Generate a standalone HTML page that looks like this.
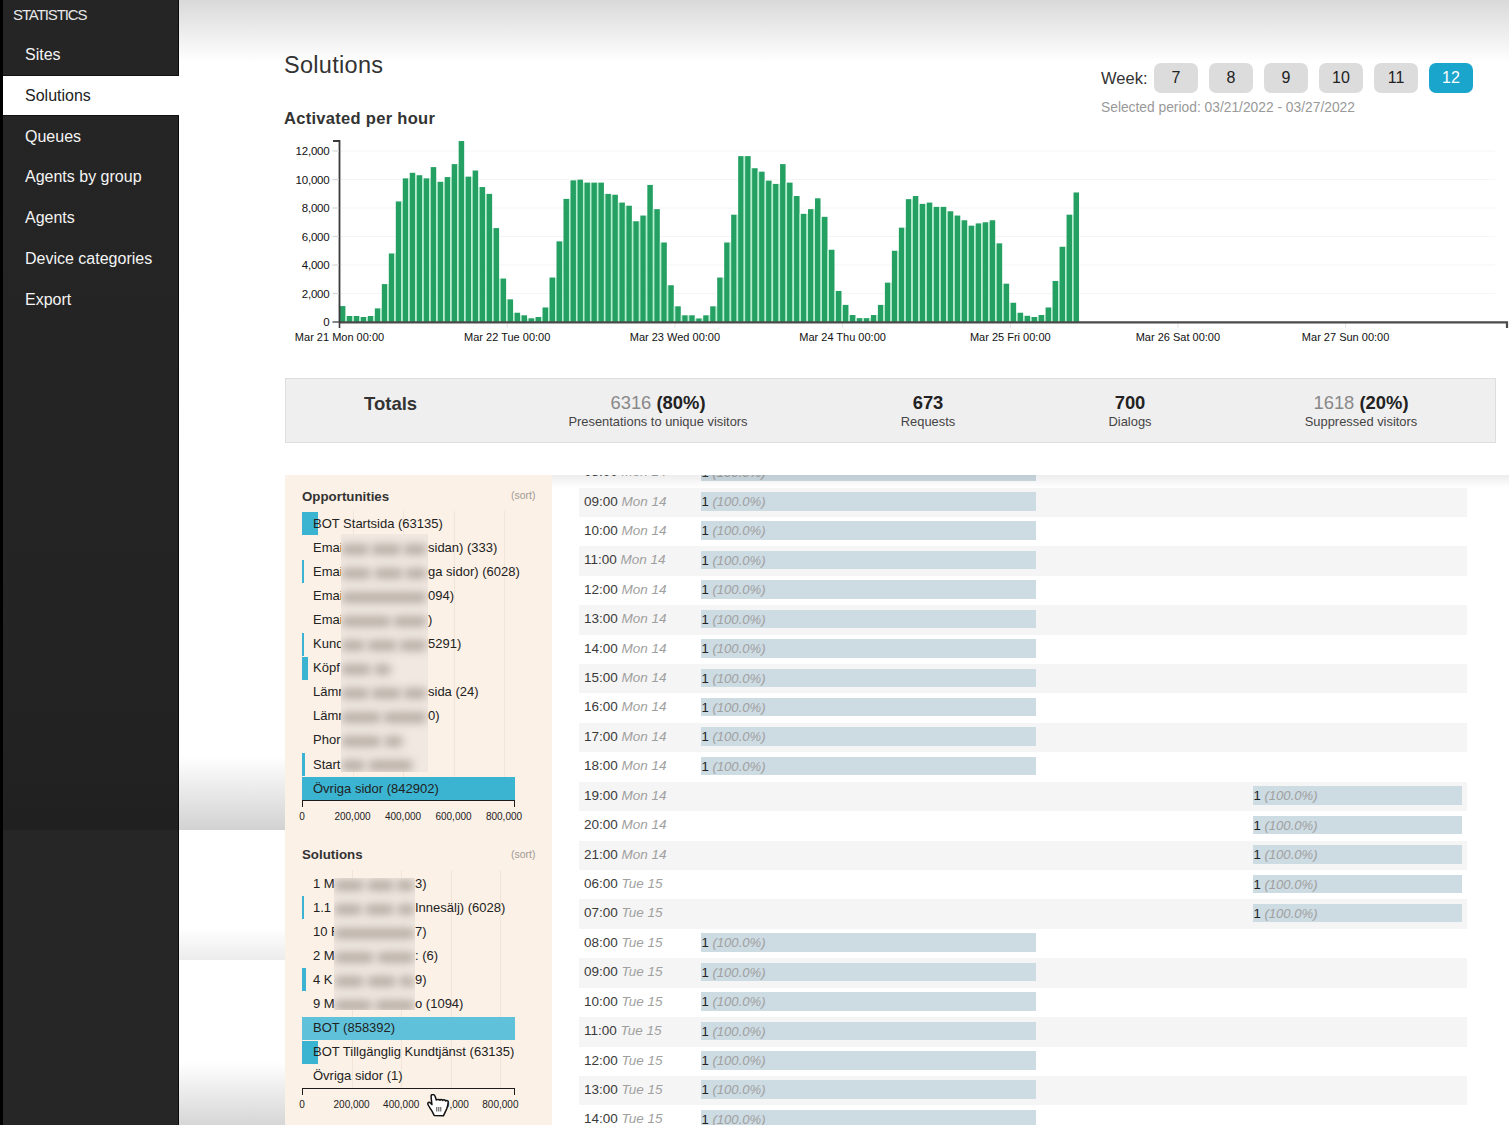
<!DOCTYPE html>
<html><head><meta charset="utf-8"><style>
*{margin:0;padding:0;box-sizing:border-box}
html,body{width:1509px;height:1125px;overflow:hidden;background:#fff;font-family:"Liberation Sans",sans-serif;position:relative}
.blk{position:absolute;left:0;top:0;width:3px;height:1125px;background:#000}
.sb{position:absolute;left:3px;top:0;width:176px;height:1125px;background:linear-gradient(#252525 0,#232323 700px,#202020 830px,#262626 830px);border-right:1px solid #0a0a0a;color:#f0f0f0}
.sbh{position:absolute;left:10px;top:5.5px;font-size:15px;letter-spacing:-1.1px;color:#e8e8e8}
.mi{position:absolute;left:0;width:176px;height:41px;line-height:41px;padding-left:22px;font-size:16px;color:#f4f4f4}
.mi.act{background:#fff;color:#222;width:176px;border-top:1px solid #111;border-bottom:1px solid #111;line-height:39px}
.topg{position:absolute;left:179px;top:0;width:1330px;height:62px;background:linear-gradient(#d9d9d9,#ffffff)}
.g1{position:absolute;left:179px;top:756px;width:106px;height:74px;background:linear-gradient(#fff,#d2d2d2)}
.g2{position:absolute;left:179px;top:830px;width:106px;height:130px;background:linear-gradient(#fff 75%,#ececec)}
.g3{position:absolute;left:179px;top:1062px;width:106px;height:63px;background:linear-gradient(#fff,#d6d6d6)}
.h1{position:absolute;left:284px;top:51.5px;font-size:23.5px;letter-spacing:0.3px;color:#333}
.h2{position:absolute;left:284px;top:109px;font-size:16.5px;letter-spacing:0.3px;font-weight:bold;color:#333}
.wk{position:absolute;font-size:16.5px;color:#333}
.wb{position:absolute;top:63px;width:44px;height:30px;border-radius:7px;background:#dcdcdc;color:#222;font-size:16px;text-align:center;line-height:30px}
.wb.on{background:#1aa5cc;color:#fff}
.per{position:absolute;left:1101px;top:100px;font-size:13.8px;color:#999}
.tot{position:absolute;left:285px;top:378px;width:1211px;height:65px;background:#f0eff0;border:1px solid #dedede}
.tt{position:absolute;left:78px;top:14px;font-size:18.5px;font-weight:bold;color:#333}
.tc{position:absolute;top:14px;width:200px;text-align:center;margin-left:-1px}
.tv{font-size:18.4px;color:#222;line-height:20px}
.tv .g{color:#888}
.tl{font-size:12.9px;color:#444;margin-top:1px}
.pan{position:absolute;left:285px;top:475px;width:267px;height:650px;background:#fcf1e6}
.ph{position:absolute;left:17px;font-size:13.3px;font-weight:bold;color:#333}
.srt{position:absolute;left:226px;font-size:10.5px;color:#a09a95}
.vg{position:absolute;width:1px;background:#f3e4d8}
.bar{position:absolute;left:17px;height:23px;background:#3ab4d1}
.it{position:absolute;left:28px;font-size:13px;color:#222;white-space:nowrap}
.it2{position:absolute;left:142px;font-size:13px;color:#222;white-space:nowrap}
.ax{position:absolute;left:17px;width:213px;height:7px;border:1.6px solid #1c1c1c;border-bottom:none}
.al{position:absolute;width:60px;text-align:center;font-size:10px;color:#222}
.tab{position:absolute;left:0;top:475px;width:1509px;height:650px;overflow:hidden}
.row{position:absolute;left:579px;width:888px;height:29.5px;font-size:13.5px;color:#3a3a3a;line-height:28px;padding-left:5px}
.row i{color:#a0a0a0}
.rb{position:absolute;top:4.5px;height:18.5px;background:#cddbe3;line-height:20px;padding-left:0.5px;font-size:13.1px;white-space:nowrap}
.rb b{font-weight:normal;color:#222}
.blur{position:absolute;background:#d8cfc8;filter:blur(6px)}
</style></head>
<body>
<div class="topg"></div>
<div class="g1"></div><div class="g2"></div><div class="g3"></div>
<div class="blk"></div>
<div class="sb">
<div class="sbh">STATISTICS</div>
<div class="mi" style="top:34.0px">Sites</div>
<div class="mi act" style="top:74.8px">Solutions</div>
<div class="mi" style="top:115.6px">Queues</div>
<div class="mi" style="top:156.4px">Agents by group</div>
<div class="mi" style="top:197.2px">Agents</div>
<div class="mi" style="top:238.0px">Device categories</div>
<div class="mi" style="top:278.8px">Export</div>
</div>
<div class="h1">Solutions</div>
<div class="h2">Activated per hour</div>
<div class="wk" style="left:1101px;top:69px">Week:</div>
<div class="wb" style="left:1154px">7</div>
<div class="wb" style="left:1209px">8</div>
<div class="wb" style="left:1264px">9</div>
<div class="wb" style="left:1319px">10</div>
<div class="wb" style="left:1374px">11</div>
<div class="wb on" style="left:1429px">12</div>
<div class="per">Selected period: 03/21/2022 - 03/27/2022</div>
<svg width="1509" height="360" style="position:absolute;left:0;top:0">
<line x1="340" y1="293.5" x2="1495" y2="293.5" stroke="#f5f5f5" stroke-width="1"/>
<line x1="340" y1="265.0" x2="1495" y2="265.0" stroke="#f5f5f5" stroke-width="1"/>
<line x1="340" y1="236.5" x2="1495" y2="236.5" stroke="#f5f5f5" stroke-width="1"/>
<line x1="340" y1="208.0" x2="1495" y2="208.0" stroke="#f5f5f5" stroke-width="1"/>
<line x1="340" y1="179.5" x2="1495" y2="179.5" stroke="#f5f5f5" stroke-width="1"/>
<line x1="340" y1="151.0" x2="1495" y2="151.0" stroke="#f5f5f5" stroke-width="1"/>
<rect x="339.90" y="306.11" width="5.5" height="15.89" fill="#23a062"/>
<rect x="345.40" y="316.01" width="1.49" height="5.99" fill="#b4f0cf"/>
<rect x="346.89" y="316.01" width="5.5" height="5.99" fill="#23a062"/>
<rect x="352.39" y="316.01" width="1.49" height="5.99" fill="#b4f0cf"/>
<rect x="353.87" y="316.01" width="5.5" height="5.99" fill="#23a062"/>
<rect x="359.37" y="317.01" width="1.49" height="4.99" fill="#b4f0cf"/>
<rect x="360.86" y="317.01" width="5.5" height="4.99" fill="#23a062"/>
<rect x="366.36" y="317.01" width="1.49" height="4.99" fill="#b4f0cf"/>
<rect x="367.85" y="316.01" width="5.5" height="5.99" fill="#23a062"/>
<rect x="373.35" y="316.01" width="1.49" height="5.99" fill="#b4f0cf"/>
<rect x="374.83" y="308.39" width="5.5" height="13.61" fill="#23a062"/>
<rect x="380.33" y="308.39" width="1.49" height="13.61" fill="#b4f0cf"/>
<rect x="381.82" y="284.10" width="5.5" height="37.91" fill="#23a062"/>
<rect x="387.32" y="284.10" width="1.49" height="37.91" fill="#b4f0cf"/>
<rect x="388.81" y="253.46" width="5.5" height="68.54" fill="#23a062"/>
<rect x="394.31" y="253.46" width="1.49" height="68.54" fill="#b4f0cf"/>
<rect x="395.80" y="201.44" width="5.5" height="120.56" fill="#23a062"/>
<rect x="401.30" y="201.44" width="1.49" height="120.56" fill="#b4f0cf"/>
<rect x="402.78" y="178.36" width="5.5" height="143.64" fill="#23a062"/>
<rect x="408.28" y="178.36" width="1.49" height="143.64" fill="#b4f0cf"/>
<rect x="409.77" y="172.80" width="5.5" height="149.20" fill="#23a062"/>
<rect x="415.27" y="175.22" width="1.49" height="146.78" fill="#b4f0cf"/>
<rect x="416.76" y="175.22" width="5.5" height="146.78" fill="#23a062"/>
<rect x="422.26" y="178.36" width="1.49" height="143.64" fill="#b4f0cf"/>
<rect x="423.74" y="178.36" width="5.5" height="143.64" fill="#23a062"/>
<rect x="429.24" y="178.36" width="1.49" height="143.64" fill="#b4f0cf"/>
<rect x="430.73" y="167.10" width="5.5" height="154.90" fill="#23a062"/>
<rect x="436.23" y="181.78" width="1.49" height="140.22" fill="#b4f0cf"/>
<rect x="437.72" y="181.78" width="5.5" height="140.22" fill="#23a062"/>
<rect x="443.22" y="181.78" width="1.49" height="140.22" fill="#b4f0cf"/>
<rect x="444.70" y="177.08" width="5.5" height="144.92" fill="#23a062"/>
<rect x="450.20" y="177.08" width="1.49" height="144.92" fill="#b4f0cf"/>
<rect x="451.69" y="164.11" width="5.5" height="157.89" fill="#23a062"/>
<rect x="457.19" y="164.11" width="1.49" height="157.89" fill="#b4f0cf"/>
<rect x="458.68" y="141.03" width="5.5" height="180.97" fill="#23a062"/>
<rect x="464.18" y="176.65" width="1.49" height="145.35" fill="#b4f0cf"/>
<rect x="465.67" y="176.65" width="5.5" height="145.35" fill="#23a062"/>
<rect x="471.17" y="176.65" width="1.49" height="145.35" fill="#b4f0cf"/>
<rect x="472.65" y="170.52" width="5.5" height="151.48" fill="#23a062"/>
<rect x="478.15" y="187.05" width="1.49" height="134.95" fill="#b4f0cf"/>
<rect x="479.64" y="187.05" width="5.5" height="134.95" fill="#23a062"/>
<rect x="485.14" y="193.89" width="1.49" height="128.11" fill="#b4f0cf"/>
<rect x="486.63" y="193.89" width="5.5" height="128.11" fill="#23a062"/>
<rect x="492.13" y="228.09" width="1.49" height="93.91" fill="#b4f0cf"/>
<rect x="493.61" y="228.09" width="5.5" height="93.91" fill="#23a062"/>
<rect x="499.11" y="278.54" width="1.49" height="43.46" fill="#b4f0cf"/>
<rect x="500.60" y="278.54" width="5.5" height="43.46" fill="#23a062"/>
<rect x="506.10" y="299.34" width="1.49" height="22.66" fill="#b4f0cf"/>
<rect x="507.59" y="299.34" width="5.5" height="22.66" fill="#23a062"/>
<rect x="513.09" y="312.74" width="1.49" height="9.26" fill="#b4f0cf"/>
<rect x="514.57" y="312.74" width="5.5" height="9.26" fill="#23a062"/>
<rect x="520.07" y="315.30" width="1.49" height="6.70" fill="#b4f0cf"/>
<rect x="521.56" y="315.30" width="5.5" height="6.70" fill="#23a062"/>
<rect x="527.06" y="318.30" width="1.49" height="3.71" fill="#b4f0cf"/>
<rect x="528.55" y="318.30" width="5.5" height="3.71" fill="#23a062"/>
<rect x="534.05" y="318.30" width="1.49" height="3.71" fill="#b4f0cf"/>
<rect x="535.54" y="317.01" width="5.5" height="4.99" fill="#23a062"/>
<rect x="541.04" y="317.01" width="1.49" height="4.99" fill="#b4f0cf"/>
<rect x="542.52" y="307.46" width="5.5" height="14.54" fill="#23a062"/>
<rect x="548.02" y="307.46" width="1.49" height="14.54" fill="#b4f0cf"/>
<rect x="549.51" y="277.54" width="5.5" height="44.46" fill="#23a062"/>
<rect x="555.01" y="277.54" width="1.49" height="44.46" fill="#b4f0cf"/>
<rect x="556.50" y="241.34" width="5.5" height="80.66" fill="#23a062"/>
<rect x="562.00" y="241.34" width="1.49" height="80.66" fill="#b4f0cf"/>
<rect x="563.48" y="198.88" width="5.5" height="123.12" fill="#23a062"/>
<rect x="568.98" y="198.88" width="1.49" height="123.12" fill="#b4f0cf"/>
<rect x="570.47" y="180.35" width="5.5" height="141.65" fill="#23a062"/>
<rect x="575.97" y="180.35" width="1.49" height="141.65" fill="#b4f0cf"/>
<rect x="577.46" y="179.64" width="5.5" height="142.36" fill="#23a062"/>
<rect x="582.96" y="182.63" width="1.49" height="139.37" fill="#b4f0cf"/>
<rect x="584.45" y="182.63" width="5.5" height="139.37" fill="#23a062"/>
<rect x="589.95" y="182.63" width="1.49" height="139.37" fill="#b4f0cf"/>
<rect x="591.43" y="182.63" width="5.5" height="139.37" fill="#23a062"/>
<rect x="596.93" y="182.63" width="1.49" height="139.37" fill="#b4f0cf"/>
<rect x="598.42" y="182.63" width="5.5" height="139.37" fill="#23a062"/>
<rect x="603.92" y="193.89" width="1.49" height="128.11" fill="#b4f0cf"/>
<rect x="605.41" y="193.89" width="5.5" height="128.11" fill="#23a062"/>
<rect x="610.91" y="194.75" width="1.49" height="127.25" fill="#b4f0cf"/>
<rect x="612.39" y="194.75" width="5.5" height="127.25" fill="#23a062"/>
<rect x="617.89" y="202.58" width="1.49" height="119.42" fill="#b4f0cf"/>
<rect x="619.38" y="202.58" width="5.5" height="119.42" fill="#23a062"/>
<rect x="624.88" y="205.72" width="1.49" height="116.28" fill="#b4f0cf"/>
<rect x="626.37" y="205.72" width="5.5" height="116.28" fill="#23a062"/>
<rect x="631.87" y="221.25" width="1.49" height="100.75" fill="#b4f0cf"/>
<rect x="633.35" y="221.25" width="5.5" height="100.75" fill="#23a062"/>
<rect x="638.85" y="221.25" width="1.49" height="100.75" fill="#b4f0cf"/>
<rect x="640.34" y="215.55" width="5.5" height="106.45" fill="#23a062"/>
<rect x="645.84" y="215.55" width="1.49" height="106.45" fill="#b4f0cf"/>
<rect x="647.33" y="184.91" width="5.5" height="137.09" fill="#23a062"/>
<rect x="652.83" y="209.14" width="1.49" height="112.86" fill="#b4f0cf"/>
<rect x="654.31" y="209.14" width="5.5" height="112.86" fill="#23a062"/>
<rect x="659.81" y="242.49" width="1.49" height="79.52" fill="#b4f0cf"/>
<rect x="661.30" y="242.49" width="5.5" height="79.52" fill="#23a062"/>
<rect x="666.80" y="285.24" width="1.49" height="36.77" fill="#b4f0cf"/>
<rect x="668.29" y="285.24" width="5.5" height="36.77" fill="#23a062"/>
<rect x="673.79" y="306.32" width="1.49" height="15.68" fill="#b4f0cf"/>
<rect x="675.28" y="306.32" width="5.5" height="15.68" fill="#23a062"/>
<rect x="680.78" y="315.30" width="1.49" height="6.70" fill="#b4f0cf"/>
<rect x="682.26" y="315.30" width="5.5" height="6.70" fill="#23a062"/>
<rect x="687.76" y="315.30" width="1.49" height="6.70" fill="#b4f0cf"/>
<rect x="689.25" y="315.30" width="5.5" height="6.70" fill="#23a062"/>
<rect x="694.75" y="318.44" width="1.49" height="3.56" fill="#b4f0cf"/>
<rect x="696.24" y="318.44" width="5.5" height="3.56" fill="#23a062"/>
<rect x="701.74" y="318.44" width="1.49" height="3.56" fill="#b4f0cf"/>
<rect x="703.22" y="315.30" width="5.5" height="6.70" fill="#23a062"/>
<rect x="708.72" y="315.30" width="1.49" height="6.70" fill="#b4f0cf"/>
<rect x="710.21" y="306.32" width="5.5" height="15.68" fill="#23a062"/>
<rect x="715.71" y="306.32" width="1.49" height="15.68" fill="#b4f0cf"/>
<rect x="717.20" y="277.54" width="5.5" height="44.46" fill="#23a062"/>
<rect x="722.70" y="277.54" width="1.49" height="44.46" fill="#b4f0cf"/>
<rect x="724.19" y="242.49" width="5.5" height="79.52" fill="#23a062"/>
<rect x="729.69" y="242.49" width="1.49" height="79.52" fill="#b4f0cf"/>
<rect x="731.17" y="214.70" width="5.5" height="107.30" fill="#23a062"/>
<rect x="736.67" y="214.70" width="1.49" height="107.30" fill="#b4f0cf"/>
<rect x="738.16" y="156.13" width="5.5" height="165.87" fill="#23a062"/>
<rect x="743.66" y="156.13" width="1.49" height="165.87" fill="#b4f0cf"/>
<rect x="745.15" y="156.13" width="5.5" height="165.87" fill="#23a062"/>
<rect x="750.65" y="168.24" width="1.49" height="153.76" fill="#b4f0cf"/>
<rect x="752.13" y="168.24" width="5.5" height="153.76" fill="#23a062"/>
<rect x="757.63" y="171.66" width="1.49" height="150.34" fill="#b4f0cf"/>
<rect x="759.12" y="171.66" width="5.5" height="150.34" fill="#23a062"/>
<rect x="764.62" y="180.64" width="1.49" height="141.36" fill="#b4f0cf"/>
<rect x="766.11" y="180.64" width="5.5" height="141.36" fill="#23a062"/>
<rect x="771.61" y="183.92" width="1.49" height="138.08" fill="#b4f0cf"/>
<rect x="773.09" y="183.92" width="5.5" height="138.08" fill="#23a062"/>
<rect x="778.59" y="183.92" width="1.49" height="138.08" fill="#b4f0cf"/>
<rect x="780.08" y="164.11" width="5.5" height="157.89" fill="#23a062"/>
<rect x="785.58" y="182.63" width="1.49" height="139.37" fill="#b4f0cf"/>
<rect x="787.07" y="182.63" width="5.5" height="139.37" fill="#23a062"/>
<rect x="792.57" y="196.03" width="1.49" height="125.97" fill="#b4f0cf"/>
<rect x="794.05" y="196.03" width="5.5" height="125.97" fill="#23a062"/>
<rect x="799.55" y="213.84" width="1.49" height="108.16" fill="#b4f0cf"/>
<rect x="801.04" y="213.84" width="5.5" height="108.16" fill="#23a062"/>
<rect x="806.54" y="213.84" width="1.49" height="108.16" fill="#b4f0cf"/>
<rect x="808.03" y="209.14" width="5.5" height="112.86" fill="#23a062"/>
<rect x="813.53" y="209.14" width="1.49" height="112.86" fill="#b4f0cf"/>
<rect x="815.02" y="198.31" width="5.5" height="123.69" fill="#23a062"/>
<rect x="820.52" y="216.83" width="1.49" height="105.17" fill="#b4f0cf"/>
<rect x="822.00" y="216.83" width="5.5" height="105.17" fill="#23a062"/>
<rect x="827.50" y="249.75" width="1.49" height="72.25" fill="#b4f0cf"/>
<rect x="828.99" y="249.75" width="5.5" height="72.25" fill="#23a062"/>
<rect x="834.49" y="290.94" width="1.49" height="31.07" fill="#b4f0cf"/>
<rect x="835.98" y="290.94" width="5.5" height="31.07" fill="#23a062"/>
<rect x="841.48" y="304.90" width="1.49" height="17.10" fill="#b4f0cf"/>
<rect x="842.96" y="304.90" width="5.5" height="17.10" fill="#23a062"/>
<rect x="848.46" y="315.02" width="1.49" height="6.98" fill="#b4f0cf"/>
<rect x="849.95" y="315.02" width="5.5" height="6.98" fill="#23a062"/>
<rect x="855.45" y="318.15" width="1.49" height="3.85" fill="#b4f0cf"/>
<rect x="856.94" y="318.15" width="5.5" height="3.85" fill="#23a062"/>
<rect x="862.44" y="318.15" width="1.49" height="3.85" fill="#b4f0cf"/>
<rect x="863.92" y="318.15" width="5.5" height="3.85" fill="#23a062"/>
<rect x="869.42" y="318.15" width="1.49" height="3.85" fill="#b4f0cf"/>
<rect x="870.91" y="315.02" width="5.5" height="6.98" fill="#23a062"/>
<rect x="876.41" y="315.02" width="1.49" height="6.98" fill="#b4f0cf"/>
<rect x="877.90" y="304.90" width="5.5" height="17.10" fill="#23a062"/>
<rect x="883.40" y="304.90" width="1.49" height="17.10" fill="#b4f0cf"/>
<rect x="884.89" y="282.67" width="5.5" height="39.33" fill="#23a062"/>
<rect x="890.39" y="282.67" width="1.49" height="39.33" fill="#b4f0cf"/>
<rect x="891.87" y="250.75" width="5.5" height="71.25" fill="#23a062"/>
<rect x="897.37" y="250.75" width="1.49" height="71.25" fill="#b4f0cf"/>
<rect x="898.86" y="227.66" width="5.5" height="94.34" fill="#23a062"/>
<rect x="904.36" y="227.66" width="1.49" height="94.34" fill="#b4f0cf"/>
<rect x="905.85" y="199.16" width="5.5" height="122.84" fill="#23a062"/>
<rect x="911.35" y="199.16" width="1.49" height="122.84" fill="#b4f0cf"/>
<rect x="912.83" y="196.03" width="5.5" height="125.97" fill="#23a062"/>
<rect x="918.33" y="203.87" width="1.49" height="118.13" fill="#b4f0cf"/>
<rect x="919.82" y="203.87" width="5.5" height="118.13" fill="#23a062"/>
<rect x="925.32" y="203.87" width="1.49" height="118.13" fill="#b4f0cf"/>
<rect x="926.81" y="202.58" width="5.5" height="119.42" fill="#23a062"/>
<rect x="932.31" y="206.86" width="1.49" height="115.14" fill="#b4f0cf"/>
<rect x="933.79" y="206.86" width="5.5" height="115.14" fill="#23a062"/>
<rect x="939.29" y="206.86" width="1.49" height="115.14" fill="#b4f0cf"/>
<rect x="940.78" y="206.86" width="5.5" height="115.14" fill="#23a062"/>
<rect x="946.28" y="211.28" width="1.49" height="110.72" fill="#b4f0cf"/>
<rect x="947.77" y="211.28" width="5.5" height="110.72" fill="#23a062"/>
<rect x="953.27" y="215.55" width="1.49" height="106.45" fill="#b4f0cf"/>
<rect x="954.76" y="215.55" width="5.5" height="106.45" fill="#23a062"/>
<rect x="960.26" y="220.25" width="1.49" height="101.75" fill="#b4f0cf"/>
<rect x="961.74" y="220.25" width="5.5" height="101.75" fill="#23a062"/>
<rect x="967.24" y="225.67" width="1.49" height="96.33" fill="#b4f0cf"/>
<rect x="968.73" y="225.67" width="5.5" height="96.33" fill="#23a062"/>
<rect x="974.23" y="225.67" width="1.49" height="96.33" fill="#b4f0cf"/>
<rect x="975.72" y="223.39" width="5.5" height="98.61" fill="#23a062"/>
<rect x="981.22" y="223.39" width="1.49" height="98.61" fill="#b4f0cf"/>
<rect x="982.70" y="222.25" width="5.5" height="99.75" fill="#23a062"/>
<rect x="988.20" y="222.25" width="1.49" height="99.75" fill="#b4f0cf"/>
<rect x="989.69" y="220.25" width="5.5" height="101.75" fill="#23a062"/>
<rect x="995.19" y="243.34" width="1.49" height="78.66" fill="#b4f0cf"/>
<rect x="996.68" y="243.34" width="5.5" height="78.66" fill="#23a062"/>
<rect x="1002.18" y="283.67" width="1.49" height="38.33" fill="#b4f0cf"/>
<rect x="1003.66" y="283.67" width="5.5" height="38.33" fill="#23a062"/>
<rect x="1009.16" y="302.76" width="1.49" height="19.24" fill="#b4f0cf"/>
<rect x="1010.65" y="302.76" width="5.5" height="19.24" fill="#23a062"/>
<rect x="1016.15" y="312.74" width="1.49" height="9.26" fill="#b4f0cf"/>
<rect x="1017.64" y="312.74" width="5.5" height="9.26" fill="#23a062"/>
<rect x="1023.14" y="315.80" width="1.49" height="6.20" fill="#b4f0cf"/>
<rect x="1024.63" y="315.80" width="5.5" height="6.20" fill="#23a062"/>
<rect x="1030.13" y="317.01" width="1.49" height="4.99" fill="#b4f0cf"/>
<rect x="1031.61" y="317.01" width="5.5" height="4.99" fill="#23a062"/>
<rect x="1037.11" y="317.01" width="1.49" height="4.99" fill="#b4f0cf"/>
<rect x="1038.60" y="315.02" width="5.5" height="6.98" fill="#23a062"/>
<rect x="1044.10" y="315.02" width="1.49" height="6.98" fill="#b4f0cf"/>
<rect x="1045.59" y="307.46" width="5.5" height="14.54" fill="#23a062"/>
<rect x="1051.09" y="307.46" width="1.49" height="14.54" fill="#b4f0cf"/>
<rect x="1052.57" y="280.96" width="5.5" height="41.04" fill="#23a062"/>
<rect x="1058.07" y="280.96" width="1.49" height="41.04" fill="#b4f0cf"/>
<rect x="1059.56" y="246.76" width="5.5" height="75.24" fill="#23a062"/>
<rect x="1065.06" y="246.76" width="1.49" height="75.24" fill="#b4f0cf"/>
<rect x="1066.55" y="214.70" width="5.5" height="107.30" fill="#23a062"/>
<rect x="1072.05" y="214.70" width="1.49" height="107.30" fill="#b4f0cf"/>
<rect x="1073.54" y="192.47" width="5.5" height="129.53" fill="#23a062"/>
<line x1="507.2" y1="323" x2="507.2" y2="328" stroke="#ddd" stroke-width="0.8"/>
<line x1="674.9" y1="323" x2="674.9" y2="328" stroke="#ddd" stroke-width="0.8"/>
<line x1="842.6" y1="323" x2="842.6" y2="328" stroke="#ddd" stroke-width="0.8"/>
<line x1="1010.3" y1="323" x2="1010.3" y2="328" stroke="#ddd" stroke-width="0.8"/>
<line x1="1177.9" y1="323" x2="1177.9" y2="328" stroke="#ddd" stroke-width="0.8"/>
<line x1="1345.6" y1="323" x2="1345.6" y2="328" stroke="#ddd" stroke-width="0.8"/>
<path d="M333 141 H339.5 V322.0" fill="none" stroke="#3a3a3a" stroke-width="1.8"/>
<path d="M339.5 322.3 H1507 V328" fill="none" stroke="#4a4a4a" stroke-width="2.2"/>
<line x1="339.5" y1="322.0" x2="339.5" y2="328" stroke="#3a3a3a" stroke-width="1.6"/>
<line x1="332.5" y1="322.0" x2="339" y2="322.0" stroke="#333" stroke-width="1.2"/>
<text x="329.5" y="326.2" text-anchor="end" font-family="Liberation Sans" font-size="11.5" letter-spacing="-0.2" fill="#111">0</text>
<line x1="332.5" y1="293.5" x2="339" y2="293.5" stroke="#d8d8d8" stroke-width="1.2"/>
<text x="329.5" y="297.7" text-anchor="end" font-family="Liberation Sans" font-size="11.5" letter-spacing="-0.2" fill="#111">2,000</text>
<line x1="332.5" y1="265.0" x2="339" y2="265.0" stroke="#d8d8d8" stroke-width="1.2"/>
<text x="329.5" y="269.2" text-anchor="end" font-family="Liberation Sans" font-size="11.5" letter-spacing="-0.2" fill="#111">4,000</text>
<line x1="332.5" y1="236.5" x2="339" y2="236.5" stroke="#d8d8d8" stroke-width="1.2"/>
<text x="329.5" y="240.7" text-anchor="end" font-family="Liberation Sans" font-size="11.5" letter-spacing="-0.2" fill="#111">6,000</text>
<line x1="332.5" y1="208.0" x2="339" y2="208.0" stroke="#d8d8d8" stroke-width="1.2"/>
<text x="329.5" y="212.2" text-anchor="end" font-family="Liberation Sans" font-size="11.5" letter-spacing="-0.2" fill="#111">8,000</text>
<line x1="332.5" y1="179.5" x2="339" y2="179.5" stroke="#d8d8d8" stroke-width="1.2"/>
<text x="329.5" y="183.7" text-anchor="end" font-family="Liberation Sans" font-size="11.5" letter-spacing="-0.2" fill="#111">10,000</text>
<line x1="332.5" y1="151.0" x2="339" y2="151.0" stroke="#d8d8d8" stroke-width="1.2"/>
<text x="329.5" y="155.2" text-anchor="end" font-family="Liberation Sans" font-size="11.5" letter-spacing="-0.2" fill="#111">12,000</text>
<text x="339.5" y="340.5" text-anchor="middle" font-family="Liberation Sans" font-size="11" fill="#111">Mar 21 Mon 00:00</text>
<text x="507.2" y="340.5" text-anchor="middle" font-family="Liberation Sans" font-size="11" fill="#111">Mar 22 Tue 00:00</text>
<text x="674.9" y="340.5" text-anchor="middle" font-family="Liberation Sans" font-size="11" fill="#111">Mar 23 Wed 00:00</text>
<text x="842.6" y="340.5" text-anchor="middle" font-family="Liberation Sans" font-size="11" fill="#111">Mar 24 Thu 00:00</text>
<text x="1010.3" y="340.5" text-anchor="middle" font-family="Liberation Sans" font-size="11" fill="#111">Mar 25 Fri 00:00</text>
<text x="1177.9" y="340.5" text-anchor="middle" font-family="Liberation Sans" font-size="11" fill="#111">Mar 26 Sat 00:00</text>
<text x="1345.6" y="340.5" text-anchor="middle" font-family="Liberation Sans" font-size="11" fill="#111">Mar 27 Sun 00:00</text>
</svg>
<div class="tot">
<div class="tt">Totals</div>
<div class="tc" style="left:273px"><div class="tv"><span class="g">6316</span> <b>(80%)</b></div><div class="tl">Presentations to unique visitors</div></div>
<div class="tc" style="left:543px"><div class="tv"><b>673</b></div><div class="tl">Requests</div></div>
<div class="tc" style="left:745px"><div class="tv"><b>700</b></div><div class="tl">Dialogs</div></div>
<div class="tc" style="left:976px"><div class="tv"><span class="g">1618</span> <b>(20%)</b></div><div class="tl">Suppressed visitors</div></div>
</div>
<div class="tab">
<div class="row" style="top:-17px;background:#fff"><span class="tm">08:00</span> <i>Mon 14</i><div class="rb" style="left:122px;width:335px">1 <i>(100.0%)</i></div></div>
<div class="row" style="top:12.5px;background:#f5f5f5"><span class="tm">09:00</span> <i>Mon 14</i><div class="rb" style="left:122px;width:335px"><b>1</b> <i>(100.0%)</i></div></div>
<div class="row" style="top:41.9px;background:#ffffff"><span class="tm">10:00</span> <i>Mon 14</i><div class="rb" style="left:122px;width:335px"><b>1</b> <i>(100.0%)</i></div></div>
<div class="row" style="top:71.3px;background:#f5f5f5"><span class="tm">11:00</span> <i>Mon 14</i><div class="rb" style="left:122px;width:335px"><b>1</b> <i>(100.0%)</i></div></div>
<div class="row" style="top:100.8px;background:#ffffff"><span class="tm">12:00</span> <i>Mon 14</i><div class="rb" style="left:122px;width:335px"><b>1</b> <i>(100.0%)</i></div></div>
<div class="row" style="top:130.2px;background:#f5f5f5"><span class="tm">13:00</span> <i>Mon 14</i><div class="rb" style="left:122px;width:335px"><b>1</b> <i>(100.0%)</i></div></div>
<div class="row" style="top:159.6px;background:#ffffff"><span class="tm">14:00</span> <i>Mon 14</i><div class="rb" style="left:122px;width:335px"><b>1</b> <i>(100.0%)</i></div></div>
<div class="row" style="top:189.0px;background:#f5f5f5"><span class="tm">15:00</span> <i>Mon 14</i><div class="rb" style="left:122px;width:335px"><b>1</b> <i>(100.0%)</i></div></div>
<div class="row" style="top:218.4px;background:#ffffff"><span class="tm">16:00</span> <i>Mon 14</i><div class="rb" style="left:122px;width:335px"><b>1</b> <i>(100.0%)</i></div></div>
<div class="row" style="top:247.9px;background:#f5f5f5"><span class="tm">17:00</span> <i>Mon 14</i><div class="rb" style="left:122px;width:335px"><b>1</b> <i>(100.0%)</i></div></div>
<div class="row" style="top:277.3px;background:#ffffff"><span class="tm">18:00</span> <i>Mon 14</i><div class="rb" style="left:122px;width:335px"><b>1</b> <i>(100.0%)</i></div></div>
<div class="row" style="top:306.7px;background:#f5f5f5"><span class="tm">19:00</span> <i>Mon 14</i><div class="rb" style="left:674px;width:209px"><b>1</b> <i>(100.0%)</i></div></div>
<div class="row" style="top:336.1px;background:#ffffff"><span class="tm">20:00</span> <i>Mon 14</i><div class="rb" style="left:674px;width:209px"><b>1</b> <i>(100.0%)</i></div></div>
<div class="row" style="top:365.5px;background:#f5f5f5"><span class="tm">21:00</span> <i>Mon 14</i><div class="rb" style="left:674px;width:209px"><b>1</b> <i>(100.0%)</i></div></div>
<div class="row" style="top:395.0px;background:#ffffff"><span class="tm">06:00</span> <i>Tue 15</i><div class="rb" style="left:674px;width:209px"><b>1</b> <i>(100.0%)</i></div></div>
<div class="row" style="top:424.4px;background:#f5f5f5"><span class="tm">07:00</span> <i>Tue 15</i><div class="rb" style="left:674px;width:209px"><b>1</b> <i>(100.0%)</i></div></div>
<div class="row" style="top:453.8px;background:#ffffff"><span class="tm">08:00</span> <i>Tue 15</i><div class="rb" style="left:122px;width:335px"><b>1</b> <i>(100.0%)</i></div></div>
<div class="row" style="top:483.2px;background:#f5f5f5"><span class="tm">09:00</span> <i>Tue 15</i><div class="rb" style="left:122px;width:335px"><b>1</b> <i>(100.0%)</i></div></div>
<div class="row" style="top:512.6px;background:#ffffff"><span class="tm">10:00</span> <i>Tue 15</i><div class="rb" style="left:122px;width:335px"><b>1</b> <i>(100.0%)</i></div></div>
<div class="row" style="top:542.1px;background:#f5f5f5"><span class="tm">11:00</span> <i>Tue 15</i><div class="rb" style="left:122px;width:335px"><b>1</b> <i>(100.0%)</i></div></div>
<div class="row" style="top:571.5px;background:#ffffff"><span class="tm">12:00</span> <i>Tue 15</i><div class="rb" style="left:122px;width:335px"><b>1</b> <i>(100.0%)</i></div></div>
<div class="row" style="top:600.9px;background:#f5f5f5"><span class="tm">13:00</span> <i>Tue 15</i><div class="rb" style="left:122px;width:335px"><b>1</b> <i>(100.0%)</i></div></div>
<div class="row" style="top:630.3px;background:#ffffff"><span class="tm">14:00</span> <i>Tue 15</i><div class="rb" style="left:122px;width:335px"><b>1</b> <i>(100.0%)</i></div></div>
</div>
<div class="pan">
<div class="ph" style="top:14px">Opportunities</div><div class="srt" style="top:14px">(sort)</div>
<div class="ph" style="top:372px">Solutions</div><div class="srt" style="top:372.5px">(sort)</div>
<div class="vg" style="left:67.5px;top:36px;height:289px"></div>
<div class="vg" style="left:118.0px;top:36px;height:289px"></div>
<div class="vg" style="left:168.5px;top:36px;height:289px"></div>
<div class="vg" style="left:219.0px;top:36px;height:289px"></div>
<div class="bar" style="top:37.0px;width:16px;background:#3ab4d1"></div>
<div class="it" style="top:40.5px">BOT Startsida (63135)</div>
<div class="it" style="top:64.6px">Emai</div>
<div class="it2" style="top:64.6px;left:143px">sidan) (333)</div>
<div class="bar" style="top:85.2px;width:2px;background:#3ab4d1"></div>
<div class="it" style="top:88.7px">Emai</div>
<div class="it2" style="top:88.7px;left:143px">ga sidor) (6028)</div>
<div class="it" style="top:112.8px">Emai</div>
<div class="it2" style="top:112.8px;left:143px">094)</div>
<div class="it" style="top:136.9px">Emai</div>
<div class="it2" style="top:136.9px;left:143px">)</div>
<div class="bar" style="top:157.5px;width:2px;background:#3ab4d1"></div>
<div class="it" style="top:161.0px">Kund</div>
<div class="it2" style="top:161.0px;left:143px">5291)</div>
<div class="bar" style="top:181.6px;width:6px;background:#3ab4d1"></div>
<div class="it" style="top:185.1px">Köpf</div>
<div class="it2" style="top:185.1px;left:143px"></div>
<div class="it" style="top:209.2px">Lämr</div>
<div class="it2" style="top:209.2px;left:143px">sida (24)</div>
<div class="it" style="top:233.3px">Lämr</div>
<div class="it2" style="top:233.3px;left:143px">0)</div>
<div class="it" style="top:257.4px">Phor</div>
<div class="it2" style="top:257.4px;left:143px"></div>
<div class="bar" style="top:278.0px;width:3px;background:#3ab4d1"></div>
<div class="it" style="top:281.5px">Start</div>
<div class="it2" style="top:281.5px;left:143px"></div>
<div class="bar" style="top:302.1px;width:213px;background:#3ab4d1"></div>
<div class="it" style="top:305.6px">Övriga sidor (842902)</div>
<div class="ax" style="top:325.0px"></div>
<div class="al" style="left:-13.0px;top:336.0px">0</div>
<div class="al" style="left:37.5px;top:336.0px">200,000</div>
<div class="al" style="left:88.0px;top:336.0px">400,000</div>
<div class="al" style="left:138.5px;top:336.0px">600,000</div>
<div class="al" style="left:189.0px;top:336.0px">800,000</div>
<div class="vg" style="left:66.6px;top:395px;height:218px"></div>
<div class="vg" style="left:116.2px;top:395px;height:218px"></div>
<div class="vg" style="left:165.8px;top:395px;height:218px"></div>
<div class="vg" style="left:215.4px;top:395px;height:218px"></div>
<div class="it" style="top:400.5px">1 M</div>
<div class="it2" style="top:400.5px;left:130px">3)</div>
<div class="bar" style="top:421.1px;width:2px;background:#3ab4d1"></div>
<div class="it" style="top:424.6px">1.1 </div>
<div class="it2" style="top:424.6px;left:130px">Innesälj) (6028)</div>
<div class="it" style="top:448.7px">10 F</div>
<div class="it2" style="top:448.7px;left:130px">7)</div>
<div class="it" style="top:472.8px">2 M</div>
<div class="it2" style="top:472.8px;left:130px">: (6)</div>
<div class="bar" style="top:493.4px;width:4px;background:#3ab4d1"></div>
<div class="it" style="top:496.9px">4 K</div>
<div class="it2" style="top:496.9px;left:130px">9)</div>
<div class="it" style="top:521.0px">9 M</div>
<div class="it2" style="top:521.0px;left:130px">o (1094)</div>
<div class="bar" style="top:541.6px;width:213px;background:#5fc2da"></div>
<div class="it" style="top:545.1px">BOT (858392)</div>
<div class="bar" style="top:565.7px;width:16px;background:#3ab4d1"></div>
<div class="it" style="top:569.2px">BOT Tillgänglig Kundtjänst (63135)</div>
<div class="it" style="top:593.3px">Övriga sidor (1)</div>
<div class="ax" style="top:613.0px"></div>
<div class="al" style="left:-13.0px;top:624.0px">0</div>
<div class="al" style="left:36.6px;top:624.0px">200,000</div>
<div class="al" style="left:86.2px;top:624.0px">400,000</div>
<div class="al" style="left:135.8px;top:624.0px">600,000</div>
<div class="al" style="left:185.4px;top:624.0px">800,000</div>
<div style="position:absolute;left:56px;top:59px;width:87px;height:238px;background:#f0e8e1;overflow:hidden"><div style="position:absolute;left:0px;top:9.5px;width:28px;height:11px;background:#b9afa7;filter:blur(4px);border-radius:5px"></div><div style="position:absolute;left:30px;top:9.5px;width:30px;height:11px;background:#b9afa7;filter:blur(4px);border-radius:5px"></div><div style="position:absolute;left:62px;top:9.5px;width:24px;height:11px;background:#b9afa7;filter:blur(4px);border-radius:5px"></div><div style="position:absolute;left:0px;top:33.6px;width:30px;height:11px;background:#b9afa7;filter:blur(4px);border-radius:5px"></div><div style="position:absolute;left:33px;top:33.6px;width:29px;height:11px;background:#b9afa7;filter:blur(4px);border-radius:5px"></div><div style="position:absolute;left:64px;top:33.6px;width:22px;height:11px;background:#b9afa7;filter:blur(4px);border-radius:5px"></div><div style="position:absolute;left:0px;top:57.7px;width:86px;height:11px;background:#b9afa7;filter:blur(4px);border-radius:5px"></div><div style="position:absolute;left:0px;top:81.8px;width:50px;height:11px;background:#b9afa7;filter:blur(4px);border-radius:5px"></div><div style="position:absolute;left:52px;top:81.8px;width:34px;height:11px;background:#b9afa7;filter:blur(4px);border-radius:5px"></div><div style="position:absolute;left:0px;top:105.9px;width:24px;height:11px;background:#b9afa7;filter:blur(4px);border-radius:5px"></div><div style="position:absolute;left:26px;top:105.9px;width:30px;height:11px;background:#b9afa7;filter:blur(4px);border-radius:5px"></div><div style="position:absolute;left:58px;top:105.9px;width:28px;height:11px;background:#b9afa7;filter:blur(4px);border-radius:5px"></div><div style="position:absolute;left:0px;top:130.0px;width:30px;height:11px;background:#b9afa7;filter:blur(4px);border-radius:5px"></div><div style="position:absolute;left:33px;top:130.0px;width:17px;height:11px;background:#b9afa7;filter:blur(4px);border-radius:5px"></div><div style="position:absolute;left:0px;top:154.1px;width:28px;height:11px;background:#b9afa7;filter:blur(4px);border-radius:5px"></div><div style="position:absolute;left:30px;top:154.1px;width:30px;height:11px;background:#b9afa7;filter:blur(4px);border-radius:5px"></div><div style="position:absolute;left:62px;top:154.1px;width:24px;height:11px;background:#b9afa7;filter:blur(4px);border-radius:5px"></div><div style="position:absolute;left:0px;top:178.2px;width:40px;height:11px;background:#b9afa7;filter:blur(4px);border-radius:5px"></div><div style="position:absolute;left:42px;top:178.2px;width:44px;height:11px;background:#b9afa7;filter:blur(4px);border-radius:5px"></div><div style="position:absolute;left:0px;top:202.3px;width:40px;height:11px;background:#b9afa7;filter:blur(4px);border-radius:5px"></div><div style="position:absolute;left:43px;top:202.3px;width:19px;height:11px;background:#b9afa7;filter:blur(4px);border-radius:5px"></div><div style="position:absolute;left:0px;top:226.4px;width:24px;height:11px;background:#b9afa7;filter:blur(4px);border-radius:5px"></div><div style="position:absolute;left:27px;top:226.4px;width:45px;height:11px;background:#b9afa7;filter:blur(4px);border-radius:5px"></div></div>
<div style="position:absolute;left:49px;top:403px;width:81px;height:132px;background:#f0e8e1;overflow:hidden"><div style="position:absolute;left:0px;top:1.5px;width:30px;height:11px;background:#b9afa7;filter:blur(4px);border-radius:5px"></div><div style="position:absolute;left:33px;top:1.5px;width:27px;height:11px;background:#b9afa7;filter:blur(4px);border-radius:5px"></div><div style="position:absolute;left:62px;top:1.5px;width:19px;height:11px;background:#b9afa7;filter:blur(4px);border-radius:5px"></div><div style="position:absolute;left:0px;top:25.6px;width:28px;height:11px;background:#b9afa7;filter:blur(4px);border-radius:5px"></div><div style="position:absolute;left:31px;top:25.6px;width:29px;height:11px;background:#b9afa7;filter:blur(4px);border-radius:5px"></div><div style="position:absolute;left:63px;top:25.6px;width:18px;height:11px;background:#b9afa7;filter:blur(4px);border-radius:5px"></div><div style="position:absolute;left:0px;top:49.7px;width:81px;height:11px;background:#b9afa7;filter:blur(4px);border-radius:5px"></div><div style="position:absolute;left:0px;top:73.8px;width:40px;height:11px;background:#b9afa7;filter:blur(4px);border-radius:5px"></div><div style="position:absolute;left:43px;top:73.8px;width:38px;height:11px;background:#b9afa7;filter:blur(4px);border-radius:5px"></div><div style="position:absolute;left:0px;top:97.9px;width:30px;height:11px;background:#b9afa7;filter:blur(4px);border-radius:5px"></div><div style="position:absolute;left:33px;top:97.9px;width:29px;height:11px;background:#b9afa7;filter:blur(4px);border-radius:5px"></div><div style="position:absolute;left:65px;top:97.9px;width:16px;height:11px;background:#b9afa7;filter:blur(4px);border-radius:5px"></div><div style="position:absolute;left:0px;top:122.0px;width:38px;height:11px;background:#b9afa7;filter:blur(4px);border-radius:5px"></div><div style="position:absolute;left:41px;top:122.0px;width:40px;height:11px;background:#b9afa7;filter:blur(4px);border-radius:5px"></div></div>
</div>
<div style="position:absolute;left:552px;top:475px;width:957px;height:13px;background:linear-gradient(rgba(0,0,0,0.07),rgba(0,0,0,0))"></div>
<svg style="position:absolute;left:427px;top:1094px" width="24" height="25" viewBox="0 0 24 25"><path d="M5.6 0.6 C4.5 0.6 4 1.5 4.1 3 L4.9 10.6 L3.1 8.7 C2.1 7.9 0.6 8.5 0.8 10 C1 11.2 3 14 5 17.2 L7.3 21.6 L16.4 21.8 L19.6 15.2 C20.6 12.2 21.2 10 21.2 8 C21.2 6.6 19.7 6.1 18.7 7 L18.2 6.4 C17.6 5.4 16.1 5.4 15.6 6.5 C15.1 5.5 13.6 5.2 12.9 6.2 C12.4 5.4 10.4 5.1 9.3 6 L8 2 C7.7 1 7 0.6 5.6 0.6 Z" fill="#fff" stroke="#111" stroke-width="1.5" stroke-linejoin="round"/><path d="M9.8 13 V17.5 M11.8 13 V17.5 M13.8 13 V17.5" stroke="#333" stroke-width="0.9"/></svg>
</body></html>
